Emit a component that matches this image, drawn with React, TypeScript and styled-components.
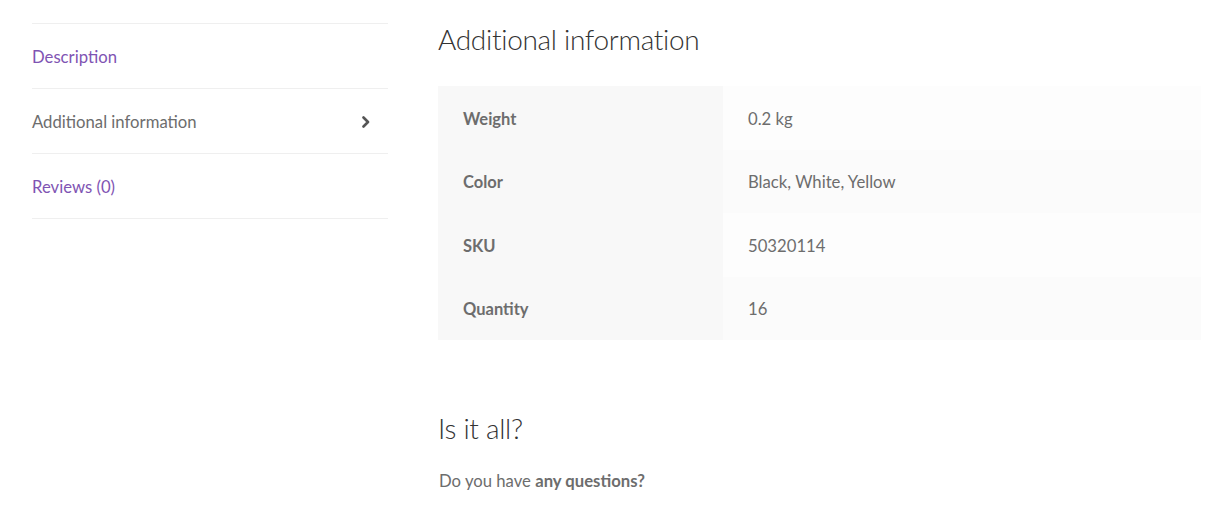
import React from "react";
import styled, { createGlobalStyle } from "styled-components";

const Global = createGlobalStyle`
  html, body { margin: 0; padding: 0; background: #ffffff; }
  body { font-family: Lato, "Liberation Sans", sans-serif; color: #6d6d6d; font-size: 16.7px; }
  * { box-sizing: border-box; }
`;

const Page = styled.div`
  display: flex;
  align-items: flex-start;
  gap: 50px;
  padding: 0 30px 0 32px;
  width: 1231px;
`;

const TabList = styled.ul`
  list-style: none;
  margin: 23px 0 0;
  padding: 0;
  width: 356px;
  flex: none;
  border-top: 1px solid #efefef;
`;

const TabItem = styled.li`
  border-bottom: 1px solid #efefef;
`;

const TabLink = styled.a<{ $active?: boolean }>`
  display: flex;
  align-items: center;
  justify-content: space-between;
  padding: 20px 18px 18px 0;
  line-height: 26px;
  font-size: 16.7px;
  text-decoration: none;
  color: ${(p) => (p.$active ? "#6d6d6d" : "#7f54b3")};
  cursor: pointer;
`;

const Panel = styled.div`
  flex: 1;
  min-width: 0;
`;

const Heading = styled.h2<{ $top: number; $bottom: number }>`
  margin: ${(p) => p.$top}px 0 ${(p) => p.$bottom}px 0;
  font-size: 28px;
  font-weight: 300;
  line-height: 36px;
  color: #333333;
  letter-spacing: -0.3px;
`;

const Table = styled.table`
  width: 100%;
  border-collapse: collapse;
  border-spacing: 0;
`;

const Row = styled.tr<{ $even: boolean }>`
  height: 63.5px;
  td { background: ${(p) => (p.$even ? "#fbfbfb" : "#fdfdfd")}; }
`;

const Th = styled.th`
  width: 285px;
  background: #f8f8f8;
  text-align: left;
  font-weight: 700;
  color: #6d6d6d;
  padding: 2px 25px 0;
  font-size: 16.5px;
`;

const Td = styled.td`
  padding: 2px 25px 0;
  color: #6d6d6d;
  font-size: 16.7px;
`;

const Paragraph = styled.p`
  margin: 0 0 0 1px;
  line-height: 26px;
  font-size: 16.7px;
  b { font-weight: 700; }
`;

const Chevron = () => (
  <svg width="8" height="12" viewBox="0 0 8 12" aria-hidden="true">
    <path d="M1.5 1.5 L6 6 L1.5 10.5" fill="none" stroke="#555" strokeWidth="2.6" strokeLinecap="round" strokeLinejoin="round" />
  </svg>
);

const tabs = [
  { label: "Description", active: false },
  { label: "Additional information", active: true },
  { label: "Reviews (0)", active: false },
];

const rows: [string, string][] = [
  ["Weight", "0.2 kg"],
  ["Color", "Black, White, Yellow"],
  ["SKU", "50320114"],
  ["Quantity", "16"],
];

export default function App() {
  return (
    <>
      <Global />
      <Page>
        <TabList>
          {tabs.map((t) => (
            <TabItem key={t.label}>
              <TabLink $active={t.active}>
                <span>{t.label}</span>
                {t.active && <Chevron />}
              </TabLink>
            </TabItem>
          ))}
        </TabList>
        <Panel>
          <Heading $top={21} $bottom={29}>Additional information</Heading>
          <Table>
            <tbody>
              {rows.map(([k, v], i) => (
                <Row key={k} $even={i % 2 === 1}>
                  <Th>{k}</Th>
                  <Td>{v}</Td>
                </Row>
              ))}
            </tbody>
          </Table>
          <Heading $top={70} $bottom={22}>Is it all?</Heading>
          <Paragraph>
            Do you have <b>any questions?</b>
          </Paragraph>
        </Panel>
      </Page>
    </>
  );
}
